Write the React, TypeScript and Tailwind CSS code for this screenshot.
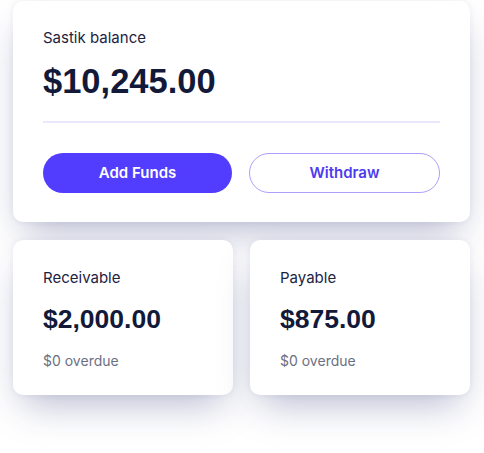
export default function App() {
  const cardShadow =
    "shadow-[0_18px_36px_-10px_rgba(40,48,115,0.35),0_0_6px_rgba(40,48,115,0.07)]";

  return (
    <div
      className="w-[484px] h-[453px] bg-white pl-[13px] pr-[14px] pt-px"
      style={{ fontFamily: "Inter, 'Liberation Sans', sans-serif" }}
    >
      {/* Balance */}
      <div
        className={`h-[221px] rounded-[10px] bg-white px-[30px] pt-[27px] ${cardShadow}`}
      >
        <div className="text-[15px] leading-[20px] text-[#1d2342]">
          Sastik balance
        </div>
        <div className="mt-[13px] text-[34.5px] leading-[40px] font-bold text-[#121939] font-['Liberation_Sans',sans-serif]">
          $10,245.00
        </div>
        <div className="mt-[20px] h-[2px] bg-[#ebe8fd]" />
        <div className="mt-[30px] flex gap-[17px]">
          <button className="h-[40px] flex-1 rounded-full bg-[#523dff] text-[15px] font-semibold text-white">
            Add Funds
          </button>
          <button className="h-[40px] flex-1 rounded-full border border-[#aaa0fb] bg-white text-[15px] font-semibold text-[#4e3bf0]">
            Withdraw
          </button>
        </div>
      </div>

      {/* Receivable / Payable */}
      <div className="mt-[18px] flex gap-[17px]">
        {[
          { label: "Receivable", amount: "$2,000.00" },
          { label: "Payable", amount: "$875.00" },
        ].map((c) => (
          <div
            key={c.label}
            className={`h-[155px] flex-1 rounded-[10px] bg-white px-[30px] pt-[28px] ${cardShadow}`}
          >
            <div className="text-[15px] leading-[20px] text-[#1d2342]">
              {c.label}
            </div>
            <div className="mt-[16px] text-[26.5px] leading-[30px] font-bold text-[#121939] font-['Liberation_Sans',sans-serif]">
              {c.amount}
            </div>
            <div className="mt-[17px] text-[14px] leading-[20px] text-[#6b6f82]">
              $0 overdue
            </div>
          </div>
        ))}
      </div>
    </div>
  );
}
